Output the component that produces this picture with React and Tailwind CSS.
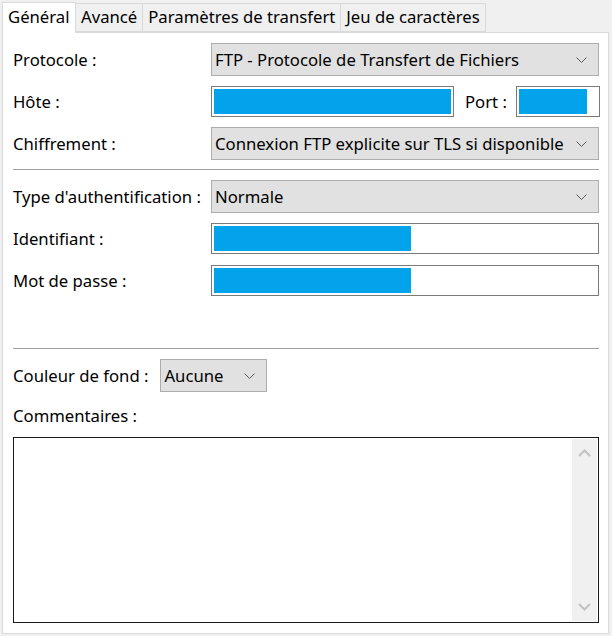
import React from "react";

const font = { fontFamily: '"Noto Sans", "Open Sans", sans-serif' };

const Chevron = ({ className = "" }) => (
  <svg width="11" height="7" viewBox="0 0 11 7" className={className}>
    <path d="M0.5 0.5 L5.5 5.5 L10.5 0.5" fill="none" stroke="#5a5a5a" strokeWidth="1" />
  </svg>
);

const Select = ({ value, className = "" }) => (
  <div
    className={`h-[33px] flex items-center justify-between bg-[#e1e1e1] border border-[#adadad] pl-[3px] pr-[11px] pt-px ${className}`}
  >
    <span className="whitespace-nowrap">{value}</span>
    <Chevron />
  </div>
);

const Field = ({ className = "", fill = "w-[236px]" }) => (
  <div className={`h-[31px] border border-[#7a7a7a] bg-white p-[2px] flex ${className}`}>
    <div className={`h-full bg-[#03a3ec] ${fill}`} />
  </div>
);

const Row = ({ label, children }) => (
  <div className="h-[33px] flex items-center">
    <span className="w-[198px] shrink-0 whitespace-nowrap pt-px">{label}</span>
    <div className="flex-1 flex items-center">{children}</div>
  </div>
);

const tabs = ["Avancé", "Paramètres de transfert", "Jeu de caractères"];

const App = () => {
  return (
    <div
      className="w-[612px] h-[636px] bg-[#f0f0f0] text-[16.7px] text-[#000] leading-none pl-[2px] pt-[1px]"
      style={font}
    >
      {/* tab strip */}
      <div className="flex items-end h-[31px]">
        <div className="h-[31px] w-[74px] bg-white border border-b-0 border-[#d9d9d9] pl-[5px] flex items-center relative z-10 -mb-px pb-[1px]">
          Général
        </div>
        {tabs.map((t) => (
          <div
            key={t}
            className="h-[29px] bg-[#f0f0f0] border border-l-0 border-[#d9d9d9] px-[5px] flex items-center whitespace-nowrap"
          >
            {t}
          </div>
        ))}
      </div>

      {/* panel */}
      <div className="w-[607px] h-[602px] bg-white border border-[#d9d9d9] pt-[10px] pl-[10px] pr-[9px]">
        <div className="flex flex-col gap-[9px]">
          <Row label="Protocole :">
            <Select value="FTP - Protocole de Transfert de Fichiers" className="flex-1" />
          </Row>
          <Row label="Hôte :">
            <Field className="w-[243px]" fill="w-[237px]" />
            <span className="ml-[11px] w-[51px] pt-px">Port :</span>
            <Field className="w-[84px]" fill="w-[68px]" />
          </Row>
          <Row label="Chiffrement :">
            <Select value="Connexion FTP explicite sur TLS si disponible" className="flex-1" />
          </Row>
        </div>

        <div className="h-px bg-[#a0a0a0] mt-[9px] mb-[10px]" />

        <div className="flex flex-col gap-[9px]">
          <Row label="Type d'authentification :">
            <Select value="Normale" className="flex-1" />
          </Row>
          <Row label="Identifiant :">
            <Field className="flex-1" fill="w-[197px]" />
          </Row>
          <Row label="Mot de passe :">
            <Field className="flex-1" fill="w-[197px]" />
          </Row>
        </div>

        <div className="h-px bg-[#a0a0a0] mt-[51px] mb-[10px]" />

        <div className="h-[33px] flex items-center">
          <span className="whitespace-nowrap pt-px">Couleur de fond :</span>
          <Select value="Aucune" className="ml-[12px] w-[107px]" />
        </div>

        <div className="h-[22px] mt-[13px] flex items-center">Commentaires :</div>

        <div className="mt-[10px] h-[186px] border border-[#1a1a1a] bg-white flex justify-end p-px">
          <div className="w-[25px] h-full bg-[#f0f0f0] flex flex-col items-center justify-between py-[10px]">
            <svg width="13" height="8" viewBox="0 0 13 8">
              <path d="M1 7 L6.5 1.5 L12 7" fill="none" stroke="#c2c2c2" strokeWidth="2" />
            </svg>
            <svg width="13" height="8" viewBox="0 0 13 8">
              <path d="M1 1 L6.5 6.5 L12 1" fill="none" stroke="#c2c2c2" strokeWidth="2" />
            </svg>
          </div>
        </div>
      </div>
    </div>
  );
};

export default App;
